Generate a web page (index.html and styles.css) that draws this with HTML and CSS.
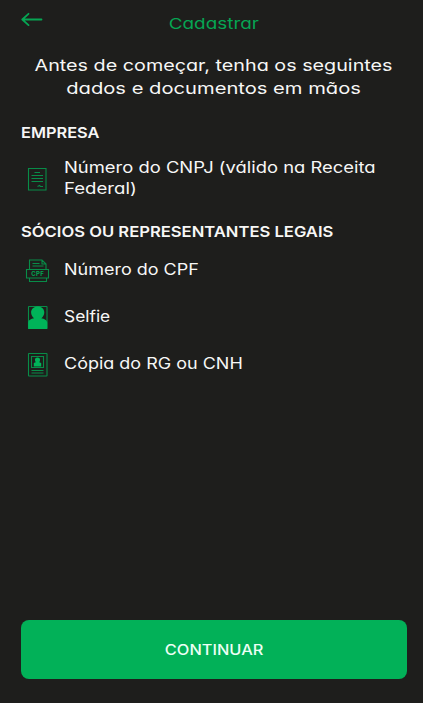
FILE: index.html
```html
<!DOCTYPE html>
<html lang="pt-BR">
<head>
<meta charset="utf-8">
<meta name="viewport" content="width=device-width, initial-scale=1">
<title>Cadastrar</title>
<link rel="stylesheet" href="styles.css">
</head>
<body>
<main class="screen">
  <header class="topbar">
    <svg class="back" viewBox="0 0 22 14" role="img" aria-label="Voltar"><path d="M20.5 7.500H1.500M7.500 1.800L1.300 7.500l6.200 5.700"/></svg>
    <h1 class="title"><span class="t">Cadastrar</span></h1>
  </header>
  <p class="intro"><span class="t">Antes de começar, tenha os seguintes</span><br><span class="t second">dados e documentos em mãos</span></p>

  <h2 class="heading"><span class="t">EMPRESA</span></h2>
  <div class="item tall">
    <svg class="icon" viewBox="0 0 25 25"><path class="line" d="M3.500 1.500h17.500v21.500H3.500zM9.500 5.500h5.500M6.500 8.500h11.500M6.500 11.500h11.500M6.500 14.500h11.500"/><path class="line" d="M12.500 19.500l2-1 1 1h2.500"/></svg>
    <p class="label"><span class="t cnpj">Número do CNPJ (válido na Receita</span><br><span class="t federal">Federal)</span></p>
  </div>

  <h2 class="heading legal"><span class="t">SÓCIOS OU REPRESENTANTES LEGAIS</span></h2>
  <div class="item">
    <svg class="icon" viewBox="0 0 25 25"><path class="line" d="M4.500 11V2h12.500l4 4v5M17 2v4h4M7.500 5.500h7M7.500 8h11M1.500 11.500h22v8.500H1.500zM4.500 20v3.500h17V20"/><text class="badge" x="12.700" y="17.900">CPF</text></svg>
    <p class="label"><span class="t">Número do CPF</span></p>
  </div>
  <div class="item">
    <svg class="icon" viewBox="0 0 25 25"><rect class="line" x="3.500" y="1.500" width="18.500" height="22" rx=".5"/><path class="solid" d="M12.800 1.500c4 0 6.500 2.600 6.500 6 0 2.500-1.400 4.600-3 5.700 3 .5 5.900 1.800 5.900 4.400v6.400H3.200v-6.400c0-2.600 2.900-3.900 5.900-4.400-1.600-1.100-3-3.200-3-5.700 0-3.400 2.700-6 6.700-6z"/></svg>
    <p class="label"><span class="t selfie">Selfie</span></p>
  </div>
  <div class="item">
    <svg class="icon" viewBox="0 0 25 25"><rect class="line" x="3.500" y="1.500" width="18.500" height="22.500" rx=".5"/><path class="line" d="M6.500 4.500h12v11h-12zM6.500 18.500h12M6.500 21h12"/><path class="solid" d="M12.500 5.500c1.800 0 2.800 1.200 2.500 3l-.7 1.800 1.900.8v3.400H8.800v-3.400l1.900-.8-.7-1.800c-.3-1.800.7-3 2.500-3z"/></svg>
    <p class="label"><span class="t copia">Cópia do RG ou CNH</span></p>
  </div>

  <button class="continue" type="button"><span class="t">CONTINUAR</span></button>
</main>
</body>
</html>
```
FILE: styles.css
```css
* { box-sizing: border-box; }
body {
  margin: 0;
  background: #1e1e1c;
  color: #f7f7f6;
  font-family: Inter, "Open Sans", sans-serif;
  font-feature-settings: "cv11";
}
h1, h2, p { margin: 0; }
.screen {
  display: flex;
  flex-direction: column;
  height: 703px;
  padding: 12px 16px 24px 21px;
}
.t {
  display: inline-block;
  transform: scaleX(1.16);
  transform-origin: left;
  white-space: nowrap;
}
.topbar {
  display: grid;
  grid-template-columns: 22px 1fr 22px;
  height: 24px;
}
.back {
  width: 22px;
  height: 14px;
  fill: none;
  stroke: #06a553;
  stroke-width: 1.8;
  stroke-linecap: round;
  stroke-linejoin: round;
}
.title {
  color: #06a553;
  font-size: 15px;
  font-weight: 400;
  line-height: 24px;
  text-align: center;
}
.title .t, .intro .t, .continue .t { transform-origin: center; }
.title .t { transform: scaleX(1.26); }
.intro {
  margin-top: 18px;
  font-size: 16.5px;
  line-height: 22.5px;
  text-align: center;
}
.intro .t { transform: scaleX(1.197); }
.intro .second { transform: scaleX(1.222); }
.heading {
  margin-top: 23px;
  font-size: 15px;
  font-weight: 600;
  line-height: 22px;
}
.heading .t { transform: scaleX(1.09); }
.legal .t { transform: scaleX(1.107); }
.item {
  display: flex;
  align-items: center;
  height: 47px;
  padding-left: 4px;
}
.tall { height: 42px; margin-top: 14px; }
.legal { margin: 21px 0 4px; }
.icon {
  flex: none;
  width: 25px;
  height: 25px;
  margin-right: 14px;
}
.line {
  fill: none;
  stroke: #088c48;
  stroke-width: 1.100;
}
.solid { fill: #00b359; }
.badge {
  fill: #00a653;
  font-size: 6px;
  font-weight: 700;
  text-anchor: middle;
  letter-spacing: .3px;
}
.label {
  margin-top: -3px;
  font-size: 15.500px;
  line-height: 21px;
}
.label .cnpj { transform: scaleX(1.187); }
.label .federal { transform: scaleX(1.2); }
.label .selfie { transform: scaleX(1.12); }
.continue {
  height: 59px;
  margin-top: auto;
  padding: 0;
  border: 0;
  border-radius: 8px;
  background: #02b158;
  color: #edfff5;
  font: 500 14px Inter, sans-serif;
}
.continue .t { transform: scaleX(1.17); }
```
